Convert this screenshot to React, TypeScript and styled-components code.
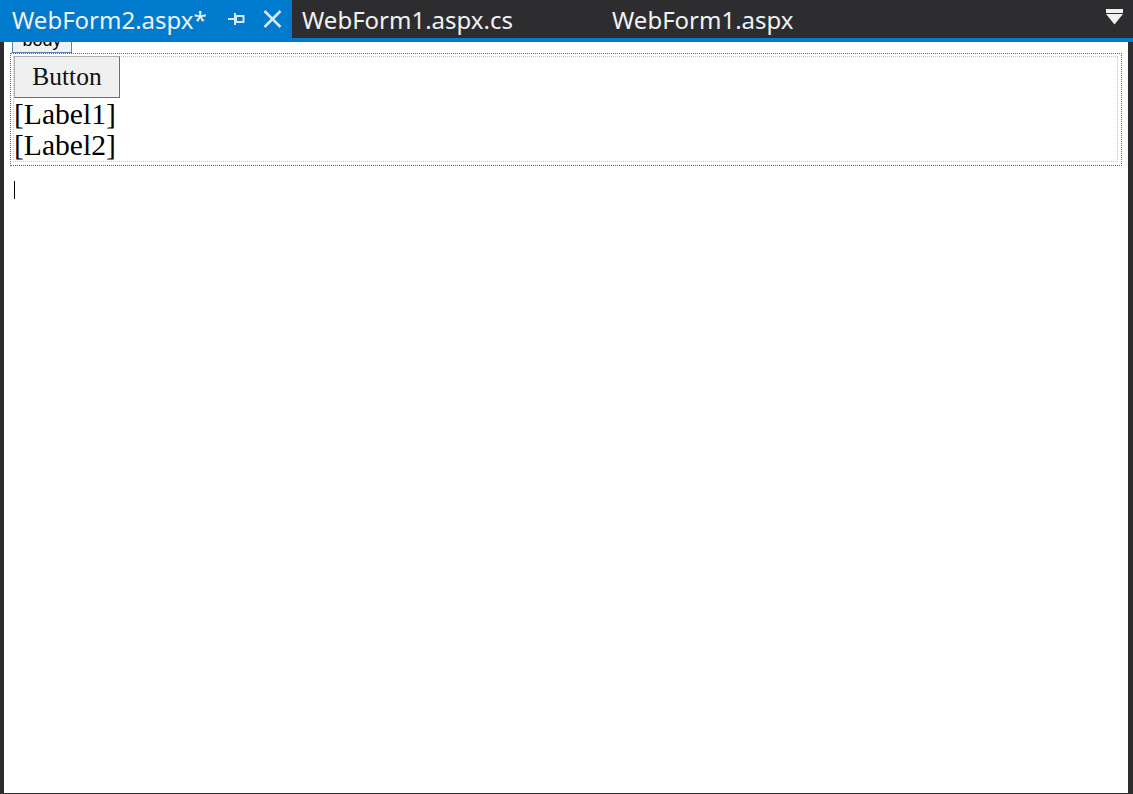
import React from 'react';
import styled, { createGlobalStyle } from 'styled-components';

const GlobalStyle = createGlobalStyle`
  html, body {
    margin: 0;
    padding: 0;
    background: #2d2d30;
  }
`;

const Frame = styled.div`
  width: 1133px;
  height: 794px;
  display: flex;
  flex-direction: column;
  background: #2d2d30;
  overflow: hidden;
`;

const TabStrip = styled.div`
  position: relative;
  z-index: 2;
  height: 38px;
  display: flex;
  align-items: stretch;
  background: #2d2d30;
  border-bottom: 4px solid #007acc;
  font-family: 'Noto Sans', 'Open Sans', sans-serif;
`;

const Tab = styled.div<{ $active?: boolean; $width: number }>`
  width: ${p => p.$width}px;
  box-sizing: border-box;
  display: flex;
  align-items: center;
  padding-left: ${p => (p.$active ? 12 : 10)}px;
  background: ${p => (p.$active ? '#007acc' : 'transparent')};
  color: #f1f1f1;
  font-size: 24px;
  white-space: nowrap;
`;

const TabLabel = styled.span`
  padding-top: 1px;
`;

const TabIcons = styled.div`
  display: flex;
  align-items: center;
  margin-left: 21px;
  gap: 18px;
`;

const Spacer = styled.div`
  flex: 1;
`;

const MenuButton = styled.div`
  width: 27px;
  display: flex;
  align-items: center;
  justify-content: flex-start;
  padding-bottom: 3px;
`;

const Workspace = styled.div`
  flex: 1;
  display: flex;
  padding-bottom: 1px;
`;

const Surface = styled.div`
  flex: 1;
  margin-left: 4px;
  margin-right: 5px;
  background: #ffffff;
  display: flex;
  flex-direction: column;
`;

const BodyTag = styled.div`
  position: relative;
  z-index: 1;
  align-self: flex-start;
  margin-top: -14px;
  margin-left: 8px;
  width: 60px;
  height: 25px;
  box-sizing: border-box;
  border: 1px solid #5b7fbd;
  border-top: 0;
  background: #f0f0f0;
  font-family: 'Liberation Sans', Arial, sans-serif;
  font-size: 18px;
  line-height: 24px;
  text-align: center;
  color: #000;
`;

const FormOutline = styled.div`
  margin: 0 6px 0 6px;
  border: 1px dotted #3768c4;
  padding: 2px 3px 3px 2px;
`;

const FormInner = styled.div`
  border: 1px dotted #c4c4c4;
  display: flex;
  flex-direction: column;
  align-items: flex-start;
  font-family: 'Liberation Serif', 'Times New Roman', serif;
`;

const AspButton = styled.div`
  width: 106px;
  height: 42px;
  box-sizing: border-box;
  margin-top: -1px;
  background: #f0f0f0;
  border: 1px solid #adadad;
  border-right-color: #6d6d6d;
  border-bottom-color: #6d6d6d;
  display: flex;
  align-items: center;
  justify-content: center;
  font-size: 25.5px;
  color: #111;
`;

const AspLabel = styled.div<{ $first?: boolean }>`
  font-size: 29.6px;
  line-height: 31px;
  color: #000;
  margin-top: ${p => (p.$first ? 1 : 0)}px;
`;

const Caret = styled.div`
  width: 1px;
  height: 18px;
  margin: 15px 0 0 10px;
  background: #000;
`;

const PinIcon = () => (
  <svg width="17" height="13" viewBox="0 0 17 13">
    <rect x="0" y="5" width="7" height="2" fill="#d5e8f7" />
    <rect x="6" y="0" width="2" height="12" fill="#d5e8f7" />
    <rect x="8" y="3" width="7.5" height="6" fill="none" stroke="#d5e8f7" strokeWidth="2" />
  </svg>
);

const CloseIcon = () => (
  <svg width="19" height="18" viewBox="0 0 19 18">
    <path d="M1.5 1 L17.5 17 M17.5 1 L1.5 17" stroke="#d5e8f7" strokeWidth="2.6" />
  </svg>
);

const MenuIcon = () => (
  <svg width="17" height="17" viewBox="0 0 17 17">
    <rect x="0" y="0" width="17" height="4" fill="#f1f1f1" />
    <path d="M0 5 L17 5 L8.5 15.5 Z" fill="#f1f1f1" />
  </svg>
);

const App: React.FC = () => {
  return (
    <>
      <GlobalStyle />
      <Frame>
        <TabStrip>
          <Tab $active $width={292}>
            <TabLabel>WebForm2.aspx*</TabLabel>
            <TabIcons>
              <PinIcon />
              <CloseIcon />
            </TabIcons>
          </Tab>
          <Tab $width={310}>
            <TabLabel>WebForm1.aspx.cs</TabLabel>
          </Tab>
          <Tab $width={300}>
            <TabLabel>WebForm1.aspx</TabLabel>
          </Tab>
          <Spacer />
          <MenuButton>
            <MenuIcon />
          </MenuButton>
        </TabStrip>
        <Workspace>
          <Surface>
            <BodyTag>body</BodyTag>
            <FormOutline>
              <FormInner>
                <AspButton>Button</AspButton>
                <AspLabel $first>[Label1]</AspLabel>
                <AspLabel>[Label2]</AspLabel>
              </FormInner>
            </FormOutline>
            <Caret />
          </Surface>
        </Workspace>
      </Frame>
    </>
  );
};

export default App;
